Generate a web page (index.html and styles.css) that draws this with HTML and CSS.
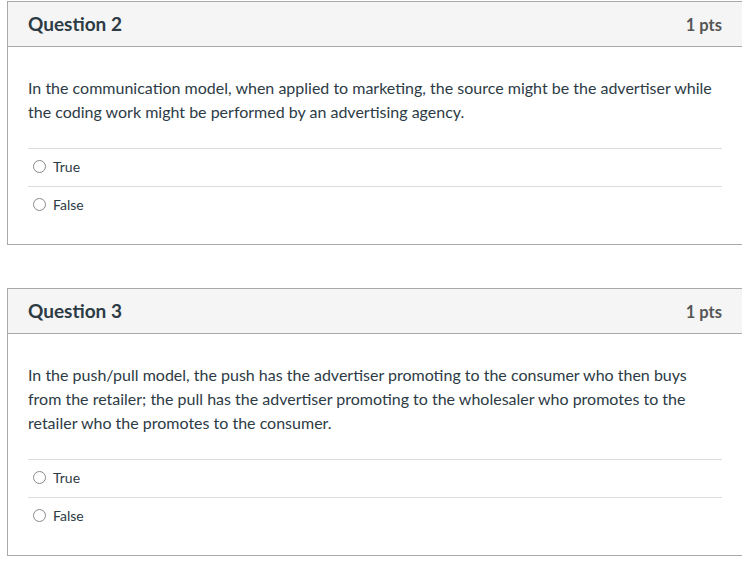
FILE: index.html
```html
<!DOCTYPE html>
<html lang="en">
<head>
<meta charset="utf-8">
<title>Quiz</title>
<link rel="stylesheet" href="styles.css">
</head>
<body>
<div class="page">
  <div class="question">
    <div class="q-header">
      <span class="q-title">Question 2</span>
      <span class="q-pts">1 pts</span>
    </div>
    <div class="q-body">
      <div class="q-text">In the communication model, when applied to marketing, the source might be the advertiser while the coding work might be performed by an advertising agency.</div>
      <div class="answers">
        <label class="answer"><span class="radio"></span><span class="a-label">True</span></label>
        <label class="answer"><span class="radio"></span><span class="a-label">False</span></label>
      </div>
    </div>
  </div>
  <div class="question">
    <div class="q-header">
      <span class="q-title">Question 3</span>
      <span class="q-pts">1 pts</span>
    </div>
    <div class="q-body">
      <div class="q-text">In the push/pull model, the push has the advertiser promoting to the consumer who then buys from the retailer; the pull has the advertiser promoting to the wholesaler who promotes to the retailer who the promotes to the consumer.</div>
      <div class="answers">
        <label class="answer"><span class="radio"></span><span class="a-label">True</span></label>
        <label class="answer"><span class="radio"></span><span class="a-label">False</span></label>
      </div>
    </div>
  </div>
</div>
</body>
</html>
```

FILE: styles.css
```css
html, body {
  margin: 0;
  padding: 0;
  background: #fff;
}
body {
  font-family: Lato, "Open Sans", "Liberation Sans", sans-serif;
  color: #2d3b45;
  overflow: hidden;
}
.page {
  padding: 1px 0 0 7px;
  width: 736px;
  display: flex;
  flex-direction: column;
  gap: 43px;
}
.question {
  border: 1px solid #a9a9a9;
  width: 734px;
  background: #fff;
}
.q-header {
  height: 44px;
  background: #f5f5f5;
  border-bottom: 1px solid #a9a9a9;
  display: flex;
  align-items: center;
  justify-content: space-between;
  padding: 0 20px;
}
.q-title {
  font-size: 19px;
  font-weight: 700;
  color: #2d3b45;
  margin-bottom: 2px;
}
.q-pts {
  font-size: 16.5px;
  font-weight: 700;
  color: #555;
  margin-top: 2px;
}
.q-body {
  padding: 29px 20px 20px;
}
.q-text {
  font-size: 16px;
  line-height: 24px;
  margin-bottom: 24px;
}
.answers {
  display: flex;
  flex-direction: column;
}
.answer {
  display: flex;
  align-items: center;
  height: 34px;
  padding: 0 0 3px 5px;
  border-top: 1px solid #dcdcdc;
  gap: 7px;
}
.radio {
  width: 11px;
  height: 11px;
  border: 1px solid #8a8a8a;
  border-radius: 50%;
  background: #fff;
}
.a-label {
  font-size: 14px;
  color: #2d3b45;
}
```
